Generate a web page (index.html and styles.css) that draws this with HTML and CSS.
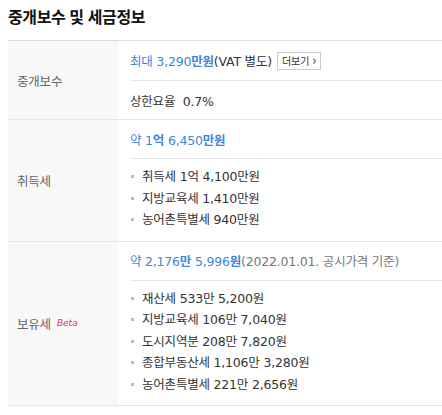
FILE: index.html
```html
<!DOCTYPE html>
<html lang="ko">
<head>
    <meta charset="UTF-8">
    <meta name="viewport" content="width=device-width, initial-scale=1.0">
    <title>중개보수 및 세금정보</title>
    <link rel="stylesheet" href="styles.css">
</head>
<body>
    <h2 class="title">중개보수 및 세금정보</h2>

    <div class="info-table">
        <!-- 중개보수 -->
        <div class="info-row">
            <div class="info-label">중개보수</div>
            <div class="info-body">
                <div class="info-line">
                    <span class="price">최대 3,290<b>만원</b></span>(VAT 별도)
                    <button class="more-btn">더보기 <span class="arrow">&#x203A;</span></button>
                </div>
                <div class="info-line">상한요율&nbsp; 0.7%</div>
            </div>
        </div>

        <!-- 취득세 -->
        <div class="info-row">
            <div class="info-label">취득세</div>
            <div class="info-body">
                <div class="info-line">
                    <span class="price">약 1<b>억</b> 6,450<b>만원</b></span>
                </div>
                <ul class="tax-list">
                    <li>취득세 1억 4,100만원</li>
                    <li>지방교육세 1,410만원</li>
                    <li>농어촌특별세 940만원</li>
                </ul>
            </div>
        </div>

        <!-- 보유세 -->
        <div class="info-row">
            <div class="info-label">보유세 <em class="beta">Beta</em></div>
            <div class="info-body">
                <div class="info-line">
                    <span class="price">약 2,176<b>만</b> 5,996<b>원</b></span><span class="note">(2022.01.01. 공시가격 기준)</span>
                </div>
                <ul class="tax-list">
                    <li>재산세 533만 5,200원</li>
                    <li>지방교육세 106만 7,040원</li>
                    <li>도시지역분 208만 7,820원</li>
                    <li>종합부동산세 1,106만 3,280원</li>
                    <li>농어촌특별세 221만 2,656원</li>
                </ul>
            </div>
        </div>
    </div>
</body>
</html>
```

FILE: styles.css
```css
* {
    box-sizing: border-box;
    margin: 0;
    padding: 0;
}

body {
    font-family: "Noto Sans CJK KR", "Noto Sans", sans-serif;
    background-color: #ffffff;
    color: #333333;
    padding: 0 0 0 8px;
}

.title {
    font-size: 16px;
    font-weight: bold;
    color: #111111;
    letter-spacing: -0.4px;
    line-height: 22px;
    padding-top: 5px;
    height: 40px;
}

.info-table {
    border-top: 1px solid #dddddd;
    font-family: "DejaVu Sans", "Noto Sans CJK KR", sans-serif;
    font-size: 12.5px;
    letter-spacing: -0.2px;
}

.info-row {
    display: flex;
    border-bottom: 1px solid #e6e6e6;
}

.info-label {
    width: 110px;
    flex-shrink: 0;
    background-color: #f8f8f8;
    color: #666666;
    padding-left: 9px;
    display: flex;
    align-items: center;
    gap: 6px;
}

.info-body {
    flex: 1;
    padding-left: 12px;
}

.info-line {
    height: 39px;
    display: flex;
    align-items: center;
    border-bottom: 1px solid #e6e6e6;
}

.info-row:first-child .info-line {
    height: 40px;
}

.info-row:first-child .info-line:last-child {
    border-bottom: none;
    height: 38px;
}

.price {
    color: #3d86d9;
}

.price b {
    font-weight: bold;
}

.note {
    color: #777777;
}

.more-btn {
    font-family: "Noto Sans CJK KR", sans-serif;
    font-size: 10px;
    color: #333333;
    background-color: #ffffff;
    border: 1px solid #cccccc;
    height: 18px;
    padding: 0 4px;
    margin-left: 5px;
    line-height: 16px;
}

.arrow {
    font-size: 13px;
    line-height: 10px;
}

.beta {
    font-family: "DejaVu Sans", sans-serif;
    font-size: 9px;
    color: #d33a5e;
    font-style: italic;
    letter-spacing: 0;
}

.tax-list {
    list-style: none;
    padding: 7px 0 10px 1px;
}

.tax-list li {
    line-height: 21.5px;
}

.tax-list li::before {
    content: "";
    display: inline-block;
    width: 3px;
    height: 3px;
    background-color: #bbbbbb;
    vertical-align: middle;
    margin-right: 8px;
    margin-bottom: 2px;
}
```
